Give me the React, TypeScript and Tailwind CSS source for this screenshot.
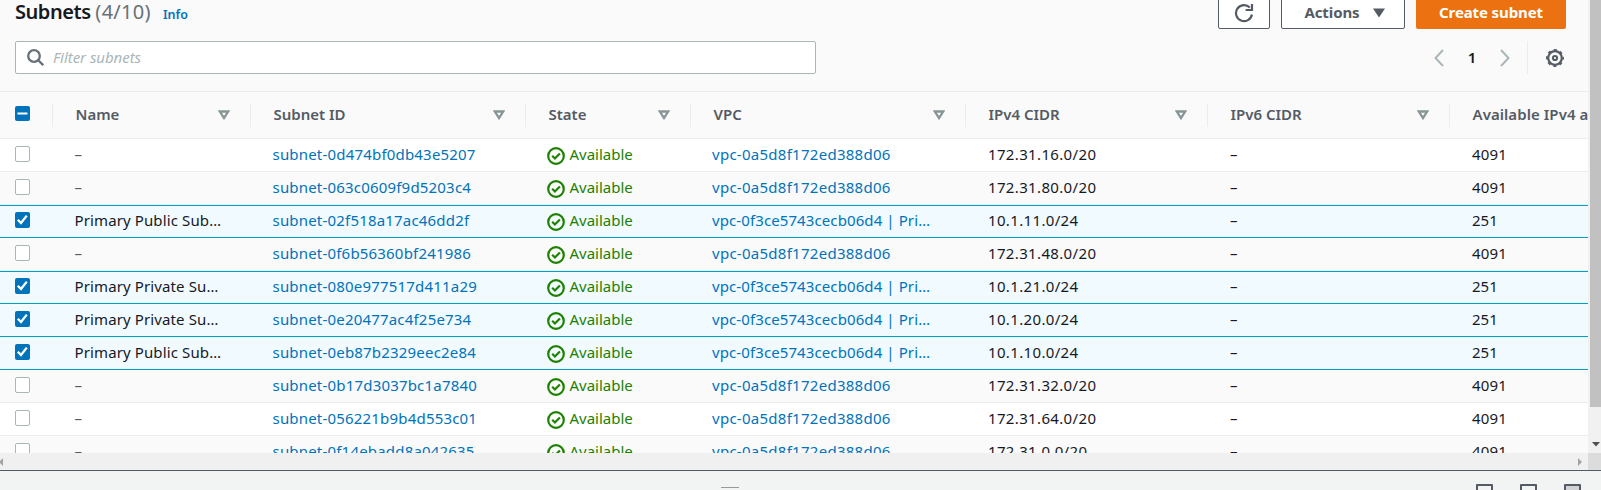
import { ReactNode } from "react";

const columns = [
  { label: "Name", width: "w-[198px]" },
  { label: "Subnet ID", width: "w-[275px]" },
  { label: "State", width: "w-[165px]" },
  { label: "VPC", width: "w-[275px]" },
  { label: "IPv4 CIDR", width: "w-[242px]" },
  { label: "IPv6 CIDR", width: "w-[242px]" },
];

const defaultVpc = "vpc-0a5d8f172ed388d06";
const primaryVpc = "vpc-0f3ce5743cecb06d4 | Pri…";

type Subnet = { name?: string; id: string; cidr: string };

const subnets: Subnet[] = [
  { id: "subnet-0d474bf0db43e5207", cidr: "172.31.16.0/20" },
  { id: "subnet-063c0609f9d5203c4", cidr: "172.31.80.0/20" },
  { name: "Primary Public Sub…", id: "subnet-02f518a17ac46dd2f", cidr: "10.1.11.0/24" },
  { id: "subnet-0f6b56360bf241986", cidr: "172.31.48.0/20" },
  { name: "Primary Private Su…", id: "subnet-080e977517d411a29", cidr: "10.1.21.0/24" },
  { name: "Primary Private Su…", id: "subnet-0e20477ac4f25e734", cidr: "10.1.20.0/24" },
  { name: "Primary Public Sub…", id: "subnet-0eb87b2329eec2e84", cidr: "10.1.10.0/24" },
  { id: "subnet-0b17d3037bc1a7840", cidr: "172.31.32.0/20" },
  { id: "subnet-056221b9b4d553c01", cidr: "172.31.64.0/20" },
  { id: "subnet-0f14ebadd8a042635", cidr: "172.31.0.0/20" },
];

function Checkbox({ state }: { state: "off" | "on" | "mixed" }) {
  if (state === "off") {
    return <span className="block h-4 w-[15px] rounded-[2px] border border-[#aab7b8] bg-white" />;
  }
  return (
    <span className={`block w-[15px] rounded-[2px] bg-[#0073bb] ${state === "on" ? "h-4" : "h-[15px]"}`}>
      <svg viewBox="0 0 15 15" className="block h-[15px] w-[15px]" fill="none" stroke="#fff" strokeWidth="2">
        {state === "on" ? <path d="M2.8 7.8 6 11 11.8 3.6" strokeWidth="2.3" /> : <path d="M2.5 7.5h10" />}
      </svg>
    </span>
  );
}

function SortIcon() {
  return (
    <svg width="12" height="10" viewBox="0 0 12 10" fill="none" stroke="#879596" strokeWidth="2.3">
      <path d="M1.9 1.5h8.2L6 8z" />
    </svg>
  );
}

function Cell({ width, children }: { width: string; children: ReactNode }) {
  return <div className={`${width} shrink-0 pb-[2px] whitespace-nowrap`}>{children}</div>;
}

type RowProps = { subnet: Subnet; striped: boolean; startsSelection: boolean };

function Row({ subnet, striped, startsSelection }: RowProps) {
  const selected = Boolean(subnet.name);
  const tone = selected
    ? "border-b-[#00a1c9] bg-[#f1faff]"
    : striped
      ? "border-b-[#eaeded] bg-[#fafafa]"
      : "border-b-[#eaeded] bg-white";
  const top = startsSelection ? "border-t-[#00a1c9]" : "border-t-transparent";
  return (
    <div className={`flex h-[33px] shrink-0 items-center border-y pl-[15px] text-[#16191f] ${tone} ${top}`}>
      <div className="w-[59.5px] shrink-0 pb-[3px]">
        <Checkbox state={selected ? "on" : "off"} />
      </div>
      <Cell width="w-[198px]">
        {subnet.name ? (
          <span className="tracking-[0.12px]">{subnet.name}</span>
        ) : (
          <span className="text-[#545b64]">–</span>
        )}
      </Cell>
      <Cell width="w-[274.5px]">
        <span className="tracking-[0.19px] text-[#0073bb]">{subnet.id}</span>
      </Cell>
      <div className="w-[165px] shrink-0">
        <span className="flex items-center gap-[5px] text-[#1d8102]">
          <svg width="18" height="18" viewBox="0 0 18 18" fill="none" stroke="#1d8102" strokeWidth="2.2">
            <circle cx="9" cy="9" r="7.8" />
            <path d="m5.2 8.8 2.7 2.7 5-5" />
          </svg>
          <span className="-ml-[0.5px] pb-[2px]">Available</span>
        </span>
      </div>
      <Cell width="w-[276px]">
        <span className={selected ? "tracking-[0.1px] text-[#0073bb]" : "tracking-[0.27px] text-[#0073bb]"}>
          {selected ? primaryVpc : defaultVpc}
        </span>
      </Cell>
      <Cell width="w-[242px]">
        <span className="tracking-[0.35px]">{subnet.cidr}</span>
      </Cell>
      <Cell width="w-[242px]">–</Cell>
      <Cell width="w-[115px]">{selected ? "251" : <span className="tracking-[0.2px]">4091</span>}</Cell>
    </div>
  );
}

function Toolbar() {
  return (
    <header className="flex h-[91px] shrink-0 justify-between pr-[22px] pl-[15px]">
      <div className="w-[801px]">
        <div className="flex h-[41px] items-baseline">
          <h1 className="text-[20px] leading-[24px] font-semibold tracking-[-0.45px] text-[#16191f]">
            Subnets <span className="font-normal tracking-[0.3px] text-[#687078]">(4/10)</span>
          </h1>
          <span className="ml-3 text-[12.5px] font-semibold text-[#0073bb]">Info</span>
        </div>
        <div className="flex h-[33px] items-center gap-[9px] rounded-[2px] border border-[#aab7b8] bg-white pl-[11px]">
          <svg width="17" height="17" viewBox="0 0 17 17" fill="none" stroke="#687078" strokeWidth="2.3">
            <circle cx="7" cy="7" r="5.8" />
            <path d="m11 11 5.2 5.2" />
          </svg>
          <span className="text-[15px] tracking-[-0.05px] text-[#aab7b8] italic">Filter subnets</span>
        </div>
      </div>
      <div className="flex flex-col items-end">
        <div className="flex h-[29px] items-end gap-[11px] text-[15px] font-bold">
          <div className="flex h-[34px] w-[52px] items-center justify-center rounded-[2px] border border-[#545b64] bg-white pt-px">
            <svg width="20" height="20" viewBox="0 0 20 20" fill="none" stroke="#545b64" strokeWidth="2.2">
              <path d="M17.9 11.5A8 8 0 1 1 15.8 4.6" />
              <path d="M18 1v6h-6.4" />
            </svg>
          </div>
          <div className="flex h-[34px] w-[124px] items-center justify-center gap-[13px] rounded-[2px] border border-[#545b64] bg-white pt-px pl-[3px] text-[#545b64]">
            <span className="tracking-[-0.1px]">Actions</span>
            <svg width="12" height="10" viewBox="0 0 12 10" fill="#545b64">
              <path d="M0 .5h12L6 9.5z" />
            </svg>
          </div>
          <div className="flex h-[34px] w-[150px] items-center justify-center rounded-[2px] bg-[#ec7211] pt-px tracking-[-0.12px] text-white">
            Create subnet
          </div>
        </div>
        <div className="mt-3 flex h-[33px] items-center pr-[2px]">
          <svg width="10" height="18" viewBox="0 0 10 18" fill="none" stroke="#aab7b8" strokeWidth="2">
            <path d="M9 1 1.5 9 9 17" />
          </svg>
          <span className="w-[56px] text-center text-[15px] font-semibold text-[#16191f]">1</span>
          <svg width="10" height="18" viewBox="0 0 10 18" fill="none" stroke="#aab7b8" strokeWidth="2">
            <path d="m1 1 7.5 8L1 17" />
          </svg>
          <span className="mr-[18px] ml-[17px] h-[33px] w-px bg-[#eaeded]" />
          <svg width="18" height="18" viewBox="0 0 18 18" fill="none" stroke="#545b64">
            <circle cx="9" cy="9" r="6.8" strokeWidth="2.2" />
            <circle cx="9" cy="9" r="8.1" strokeWidth="1.7" strokeDasharray="3.18 3.18" strokeDashoffset="1.59" />
            <circle cx="9" cy="9" r="2.1" strokeWidth="2" />
          </svg>
        </div>
      </div>
    </header>
  );
}

function PanelIcon({ fill }: { fill: string }) {
  return <span className={`h-4 w-[17px] rounded-[1px] border-2 border-[#545b64] ${fill}`} />;
}

export default function App() {
  return (
    <div className="flex h-[490px] w-[1601px] flex-col overflow-hidden bg-[#f2f3f3] font-['Noto_Sans',sans-serif]">
      <div className="flex h-[453px] shrink-0">
        <main className="flex w-[1588px] flex-col overflow-hidden bg-[#fafafa]">
          <Toolbar />
          <div className="flex h-12 shrink-0 items-center border-y border-[#eaeded] pl-[15px] text-[15px] font-semibold text-[#545b64]">
            <div className="w-[37px] shrink-0 pb-[3px]">
              <Checkbox state="mixed" />
            </div>
            {columns.map((column) => (
              <div
                key={column.label}
                className={`flex h-[23px] shrink-0 items-center justify-between border-l border-[#eaeded] pr-5 pl-[22.5px] ${column.width}`}
              >
                <span className="pb-[2px]">{column.label}</span>
                <SortIcon />
              </div>
            ))}
            <div className="flex h-[23px] shrink-0 items-center border-l border-[#eaeded] pb-[2px] pl-[22.5px] tracking-[0.06px] whitespace-nowrap">
              Available IPv4 a
            </div>
          </div>
          <div className="flex flex-col text-[15px]">
            {subnets.map((subnet, index) => (
              <Row
                key={subnet.id}
                subnet={subnet}
                striped={index % 2 === 1}
                startsSelection={Boolean(subnet.name) && !subnets[index - 1]?.name}
              />
            ))}
          </div>
        </main>
        <div className="flex w-[13px] flex-col items-end bg-[#f1f1f1]">
          <div className="h-[407px] w-[11px] bg-[#c1c1c1]" />
          <svg width="8" height="5" viewBox="0 0 8 5" className="mt-[35px] mr-px" fill="#505050">
            <path d="M0 0h8L4 4.5z" />
          </svg>
        </div>
      </div>
      <div className="flex h-[17px] shrink-0 items-center bg-[#f0f0f0]">
        <svg width="3" height="8" viewBox="0 0 3 8" fill="#a3a3a3">
          <path d="M3 0v8L0 5V3z" />
        </svg>
        <svg width="4" height="8" viewBox="0 0 4 8" className="mr-[6px] ml-auto" fill="#a3a3a3">
          <path d="M0 0v8l4-4z" />
        </svg>
        <div className="h-[17px] w-[13px] bg-[#dcdcdc]" />
      </div>
      <footer className="flex h-5 shrink-0 items-start border-t border-[#545b64] pt-[13px]">
        <span className="mt-[3px] ml-[721px] h-px w-[18px] bg-[#999]" />
        <div className="ml-auto flex gap-[27px] pr-[20px]">
          <PanelIcon fill="bg-[#f2f3f3]" />
          <PanelIcon fill="bg-[#f2f3f3]" />
          <PanelIcon fill="bg-[#d0d2d5]" />
        </div>
      </footer>
    </div>
  );
}
